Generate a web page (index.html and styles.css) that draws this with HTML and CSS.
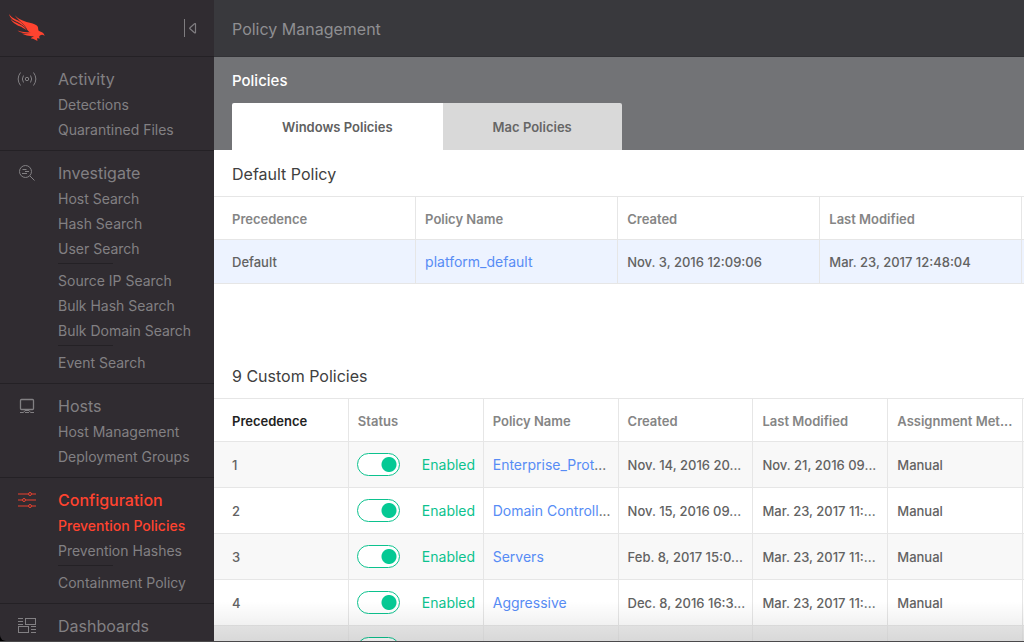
FILE: index.html
```html
<!DOCTYPE html>
<html lang="en">
<head>
<meta charset="utf-8">
<meta name="viewport" content="width=device-width, initial-scale=1">
<title>Policy Management</title>
<link rel="stylesheet" href="styles.css">
</head>
<body>
<div class="app">
  <aside class="sidebar">
    <div class="brand">
      <a class="logo" href="#" aria-label="Home">
        <svg width="36" height="28" viewBox="0 0 36 28" fill="#ff432f">
          <path d="M6 1.300C8 4.500 12 6 17.600 8C22 9.200 26 9.800 27.800 11.500C30 13.500 28.500 15.500 30 17C32 18 35 18 35.600 22C34 20.500 32.500 20.500 31 21.500C29.500 22.500 30.500 24 31 24.500L28 24.200L28.500 27C26.500 26 25 24.500 22 24.500C22 23.300 24 23 25 22.300C21 22.500 15 21 13 19.500C17 20 20 19.800 22.500 19.300C18 17.500 17.500 13.500 15.500 11.500C13 8 8.500 6 6 1.300Z"/>
          <path d="M0 0C2.500 4 6.500 5 10 7C13.500 9 15.500 11.500 17.500 14.500C14.500 11.500 12 10 8.500 8C5 6.500 1 4.500 0 0Z"/>
          <path d="M1.500 4.500C4 8 8 8.500 12 11C15 12.500 16.500 14.500 18 16.500C15 14.500 13 13 10 12C7 10.500 3 8.500 1.500 4.500Z"/>
          <path d="M8.500 16.500C13 18.200 17 18 22 18.300L24 20C18 19.800 12 19.500 8.500 16.500Z"/>
        </svg>
      </a>
      <button class="collapse" type="button" aria-label="Collapse menu">
        <svg width="14" height="20" viewBox="0 0 14 20" fill="none" stroke="#7f7d80"><path d="M1.500 1v18"/><path d="M12.500 6v8.500c0 .5-.6.5-1 .2L7 10.700c-.5-.4-.5-.6 0-1L11.500 5.800c.4-.3 1-.3 1 .2Z" stroke-width="1.200"/></svg>
      </button>
    </div>
    <nav>
      <section class="group">
        <a class="group-title" href="#"><span class="icon"><svg width="20" height="16" viewBox="0 0 20 16" fill="none" stroke="currentColor"><circle cx="10" cy="8" r="1.700"/><path d="M6.500 4.500Q4.200 8 6.500 11.500M13.500 4.500Q15.800 8 13.500 11.500M3.500 1.500Q-1.200 8 3.500 14.500M16.500 1.500Q21.200 8 16.500 14.500"/></svg></span>Activity</a>
        <ul><li><a href="#">Detections</a></li><li><a href="#">Quarantined Files</a></li></ul>
      </section>
      <section class="group">
        <a class="group-title" href="#"><span class="icon"><svg width="18" height="18" viewBox="0 0 18 18" fill="none" stroke="currentColor"><circle cx="7.500" cy="7.500" r="6"/><path d="M12 12l4.500 4.500M4.500 5.500h4M7 7.500h4M4 9.500h5"/></svg></span>Investigate</a>
        <ul><li><a href="#">Host Search</a></li><li><a href="#">Hash Search</a></li><li><a href="#">User Search</a></li></ul>
        <hr>
        <ul><li><a href="#">Source IP Search</a></li><li><a href="#">Bulk Hash Search</a></li><li><a href="#">Bulk Domain Search</a></li></ul>
        <hr>
        <ul><li><a href="#">Event Search</a></li></ul>
      </section>
      <section class="group">
        <a class="group-title" href="#"><span class="icon"><svg width="16" height="16" viewBox="0 0 16 16" fill="none" stroke="currentColor"><rect x="1.500" y="1.500" width="13" height="10" rx="1" stroke-width="1.300"/><path d="M1 14.500h3.500L6 12.500h4l1.500 2H15M6 14.500h4"/></svg></span>Hosts</a>
        <ul><li><a href="#">Host Management</a></li><li><a href="#">Deployment Groups</a></li></ul>
      </section>
      <section class="group active">
        <a class="group-title" href="#"><span class="icon"><svg width="18" height="16" viewBox="0 0 18 16" fill="none" stroke="currentColor" stroke-width=".9"><path d="M0 2h10M14 2h4M0 8h4M8 8h10M0 14h10M14 14h4"/><circle cx="12" cy="2" r="1.500"/><circle cx="6" cy="8" r="1.500"/><circle cx="12" cy="14" r="1.500"/></svg></span>Configuration</a>
        <ul><li><a class="current" href="#" aria-current="page">Prevention Policies</a></li><li><a href="#">Prevention Hashes</a></li></ul>
        <hr>
        <ul><li><a href="#">Containment Policy</a></li></ul>
      </section>
      <section class="group">
        <a class="group-title" href="#"><span class="icon"><svg width="18" height="16" viewBox="0 0 18 16" fill="none" stroke="currentColor"><rect x="7.500" y=".5" width="10" height="6"/><rect x=".5" y="8.500" width="10" height="6"/><path d="M0 .5h5M0 3.500h5M0 6.500h5M13 8.500h5M13 11.500h5M13 14.500h5"/></svg></span>Dashboards</a>
      </section>
    </nav>
  </aside>
  <div class="main">
    <header class="topbar"><h1>Policy Management</h1></header>
    <div class="subhead">
      <h2>Policies</h2>
      <div class="tabs" role="tablist">
        <button class="tab selected" type="button" role="tab" aria-selected="true">Windows Policies</button>
        <button class="tab" type="button" role="tab" aria-selected="false">Mac Policies</button>
      </div>
    </div>
    <main>
      <section class="panel">
        <h3>Default Policy</h3>
        <table class="default">
          <thead><tr><th>Precedence</th><th>Policy Name</th><th>Created</th><th>Last Modified</th><td></td></tr></thead>
          <tbody><tr><td>Default</td><td><a href="#">platform_default</a></td><td>Nov. 3, 2016 12:09:06</td><td>Mar. 23, 2017 12:48:04</td><td></td></tr></tbody>
        </table>
      </section>
      <section class="panel">
        <h3>9 Custom Policies</h3>
        <table class="custom">
          <thead><tr><th class="sorted">Precedence</th><th>Status</th><th>Policy Name</th><th>Created</th><th>Last Modified</th><th>Assignment Met...</th><td></td></tr></thead>
          <tbody>
            <tr><td>1</td><td><label class="status"><input type="checkbox" role="switch" checked>Enabled</label></td><td><a href="#">Enterprise_Prot</a>...</td><td>Nov. 14, 2016 20...</td><td>Nov. 21, 2016 09...</td><td>Manual</td><td></td></tr>
            <tr><td>2</td><td><label class="status"><input type="checkbox" role="switch" checked>Enabled</label></td><td><a href="#">Domain Controll</a>...</td><td>Nov. 15, 2016 09...</td><td>Mar. 23, 2017 11:...</td><td>Manual</td><td></td></tr>
            <tr><td>3</td><td><label class="status"><input type="checkbox" role="switch" checked>Enabled</label></td><td><a href="#">Servers</a></td><td>Feb. 8, 2017 15:0...</td><td>Mar. 23, 2017 11:...</td><td>Manual</td><td></td></tr>
            <tr><td>4</td><td><label class="status"><input type="checkbox" role="switch" checked>Enabled</label></td><td><a href="#">Aggressive</a></td><td>Dec. 8, 2016 16:3...</td><td>Mar. 23, 2017 11:...</td><td>Manual</td><td></td></tr>
            <tr><td></td><td><div class="status"><input type="checkbox" role="switch" aria-label="Policy status" checked></div></td><td></td><td></td><td></td><td></td><td></td></tr>
          </tbody>
        </table>
      </section>
    </main>
  </div>
</div>
</body>
</html>
```
FILE: styles.css
```css
* { box-sizing: border-box; }
body {
  margin: 0;
  background: #000;
  font: 14px/20px Inter, "Liberation Sans", sans-serif;
  color: #626262;
}
a { color: inherit; text-decoration: none; }
button { font: inherit; border: 0; padding: 0; background: none; cursor: pointer; }
h1, h2, h3 { margin: 0; font-size: 16px; font-weight: 400; }

.app {
  position: relative;
  display: flex;
  height: 100vh;
  overflow: hidden;
  border-bottom: 1px solid #4a494b;
}

/* Sidebar */
.sidebar {
  flex: 0 0 214px;
  overflow: hidden;
  background: #302c31;
  color: #828083;
  border-bottom-left-radius: 6px;
}
.brand {
  display: flex;
  justify-content: space-between;
  align-items: center;
  height: 57px;
  padding: 0 17px 0 9px;
  border-bottom: 1px solid #242125;
}
.logo svg, .collapse svg, .icon svg { display: block; }
.group { padding: 9px 0 8px; border-bottom: 1px solid #242125; }
.group-title {
  display: flex;
  align-items: center;
  height: 26px;
  font-size: 16px;
}
.icon { display: flex; justify-content: center; width: 54px; margin-right: 4px; }
.group ul { margin: 0; padding: 0 0 0 58px; list-style: none; line-height: 25px; }
.group hr { width: 55px; height: 1px; margin: 2px 0 4px 58px; border: 0; background: #242125; }
.active .group-title, .current { color: #ff432f; font-weight: 500; }

/* Main area */
.main {
  flex: 1;
  min-width: 0;
  background: #fff;
}
.main::after {
  content: "";
  position: absolute;
  left: 214px;
  right: 0;
  bottom: 0;
  height: 40px;
  background: linear-gradient(transparent, rgba(0, 0, 0, .09));
  pointer-events: none;
}
.topbar {
  display: flex;
  align-items: center;
  height: 57px;
  padding: 2px 18px 0;
  background: #39393d;
  border-bottom: 1px solid #323236;
  color: #8f8f92;
}
.subhead { padding: 14px 18px 0; background: #727376; }
.subhead h2 { color: #fff; font-size: 15px; font-weight: 500; line-height: 20px; }
.tabs { display: flex; margin-top: 12px; }
.tab {
  height: 47px;
  padding: 0 50px;
  background: #d9d9d9;
  color: #666;
  font-size: 13px;
  font-weight: 600;
}
.tab:first-child { border-top-left-radius: 2px; }
.tab:last-child { border-top-right-radius: 2px; }
.tab.selected { background: #fff; color: #606060; }

.panel h3 { padding: 14px 18px 12px; color: #404040; }
.panel + .panel { padding-top: 68px; }

table {
  width: 100%;
  table-layout: fixed;
  border-collapse: separate;
  border-spacing: 0;
  border-top: 1px solid #e6e6e6;
}
th, td {
  padding: 1px 0 0 9px;
  text-align: left;
  white-space: nowrap;
  border-right: 1px solid #e6e6e6;
  border-bottom: 1px solid #e6e6e6;
}
th { height: 43px; padding-top: 2px; font-size: 13px; font-weight: 600; color: #858585; }
td { font-size: 13px; font-weight: 500; }
th:first-child, td:first-child { padding-left: 18px; }
th:last-child, td:last-child { padding: 0; border-right: 0; }
td a { color: #578cf5; font-size: 14px; font-weight: 400; }
.sorted { color: #222; }

.default th { width: 24.95%; }
.default tbody td { height: 44px; background: #edf3ff; }

.custom th { width: 16.65%; }
.custom tbody td { height: 46px; }
.custom tbody tr:nth-child(odd) td { background: #f8f8f8; }
.custom tbody tr:last-child td { background: #eee; }

.status {
  display: flex;
  align-items: center;
  gap: 22px;
  margin-left: -1px;
  color: #0cc28e;
  font-size: 14px;
  font-weight: 400;
}
.status input {
  appearance: none;
  flex: none;
  width: 43px;
  height: 23px;
  margin: 0 0 2px;
  border: 1px solid #0cc28e;
  border-radius: 12px;
  background: radial-gradient(circle at 31px 50%, #05c994 0 7px, transparent 8px) #fff;
}
```
